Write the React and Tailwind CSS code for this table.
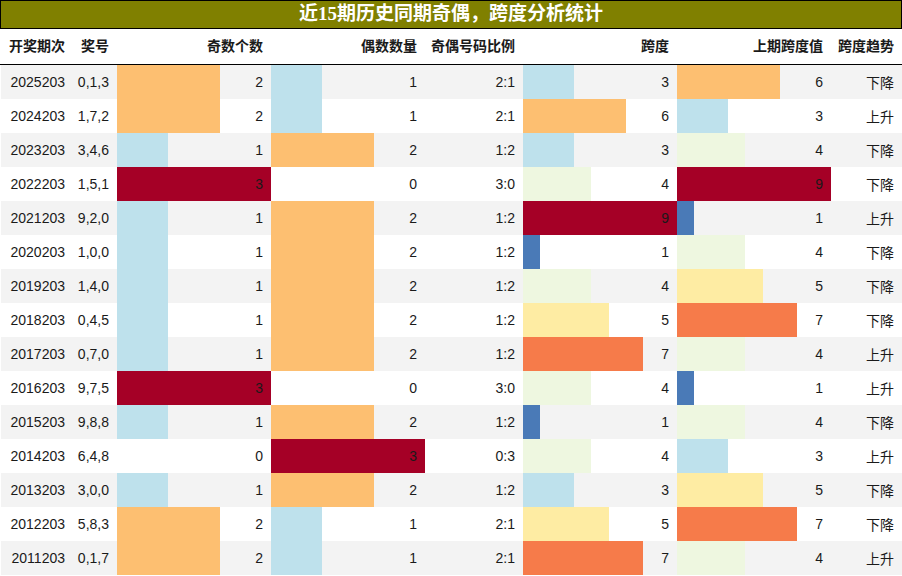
import React from "react";

const rows = [
  ["2025203", "0,1,3", 2, 1, "2:1", 3, 6, "下降"],
  ["2024203", "1,7,2", 2, 1, "2:1", 6, 3, "上升"],
  ["2023203", "3,4,6", 1, 2, "1:2", 3, 4, "下降"],
  ["2022203", "1,5,1", 3, 0, "3:0", 4, 9, "下降"],
  ["2021203", "9,2,0", 1, 2, "1:2", 9, 1, "上升"],
  ["2020203", "1,0,0", 1, 2, "1:2", 1, 4, "下降"],
  ["2019203", "1,4,0", 1, 2, "1:2", 4, 5, "下降"],
  ["2018203", "0,4,5", 1, 2, "1:2", 5, 7, "下降"],
  ["2017203", "0,7,0", 1, 2, "1:2", 7, 4, "上升"],
  ["2016203", "9,7,5", 3, 0, "3:0", 4, 1, "上升"],
  ["2015203", "9,8,8", 1, 2, "1:2", 1, 4, "下降"],
  ["2014203", "6,4,8", 0, 3, "0:3", 4, 3, "上升"],
  ["2013203", "3,0,0", 1, 2, "1:2", 3, 5, "下降"],
  ["2012203", "5,8,3", 2, 1, "2:1", 5, 7, "下降"],
  ["2011203", "0,1,7", 2, 1, "2:1", 7, 4, "上升"],
];

const countColor = { 1: "bg-[#bee1ec]", 2: "bg-[#fdbf71]", 3: "bg-[#a50026]" };
const spanColor = {
  1: "bg-[#4a7ab7]",
  3: "bg-[#bee1ec]",
  4: "bg-[#eef7e0]",
  5: "bg-[#feeca3]",
  6: "bg-[#fdbf71]",
  7: "bg-[#f67b4a]",
  9: "bg-[#a50026]",
};

function BarCell({ value, max, color }) {
  return (
    <div className="relative w-[154px] h-full flex items-center justify-end pr-2">
      {value > 0 && (
        <div
          className={"absolute left-0 top-0 bottom-0 " + color}
          style={{ width: (value / max) * 154 }}
        />
      )}
      <span className="relative">{value}</span>
    </div>
  );
}

export default function App() {
  return (
    <div className="w-[902px] h-[576px] bg-white overflow-hidden text-[14px] text-[#1a1a1a] font-['Liberation_Sans','Noto_Sans_CJK_SC',sans-serif]">
      <div className="h-[29px] bg-[#808000] border border-black flex items-center justify-center text-white font-bold text-[19px] font-['Liberation_Serif','Noto_Sans_CJK_SC',serif]">
        近15期历史同期奇偶，跨度分析统计
      </div>
      <div className="h-[36px] flex items-center font-bold border-b border-black font-['Liberation_Sans','Noto_Sans_CJK_SC',sans-serif] pl-[1px]">
        <div className="w-[72px] text-right pr-2">开奖期次</div>
        <div className="w-[44px] text-right pr-2">奖号</div>
        <div className="w-[154px] text-right pr-2">奇数个数</div>
        <div className="w-[154px] text-right pr-2">偶数数量</div>
        <div className="w-[98px] text-right pr-2">奇偶号码比例</div>
        <div className="w-[154px] text-right pr-2">跨度</div>
        <div className="w-[154px] text-right pr-2">上期跨度值</div>
        <div className="w-[71px] text-right pr-2">跨度趋势</div>
      </div>
      <div className="pl-[1px]">
        {rows.map((r, i) => (
          <div
            key={r[0]}
            className={"h-[34px] flex items-center " + (i % 2 === 0 ? "bg-[#f3f3f3]" : "bg-white")}
          >
            <div className="w-[72px] text-right pr-2">{r[0]}</div>
            <div className="w-[44px] text-right pr-2">{r[1]}</div>
            <BarCell value={r[2]} max={3} color={countColor[r[2]]} />
            <BarCell value={r[3]} max={3} color={countColor[r[3]]} />
            <div className="w-[98px] text-right pr-2">{r[4]}</div>
            <BarCell value={r[5]} max={9} color={spanColor[r[5]]} />
            <BarCell value={r[6]} max={9} color={spanColor[r[6]]} />
            <div className="w-[71px] text-right pr-2 font-['Noto_Sans_CJK_SC',sans-serif]">{r[7]}</div>
          </div>
        ))}
      </div>
    </div>
  );
}
